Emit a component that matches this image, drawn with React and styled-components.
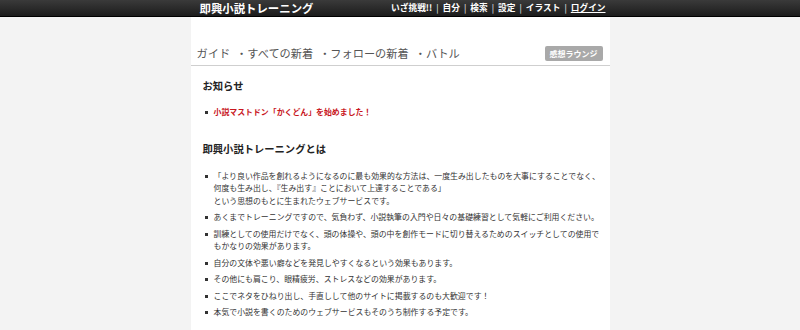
import styled, { createGlobalStyle } from "styled-components"

const GlobalStyle = createGlobalStyle`
  body {
    margin: 0;
    background: #f3f3f3;
    font-family: "Noto Sans CJK JP", "Noto Sans", sans-serif;
  }
`

const navItems = ["いざ挑戦!!", "自分", "検索", "設定", "イラスト"]

const tabs = ["ガイド", "・すべての新着", "・フォローの新着", "・バトル"]

const about = [
  ["「より良い作品を創れるようになるのに最も効果的な方法は、一度生み出したものを大事にすることでなく、", "何度も生み出し、『生み出す』ことにおいて上達することである」", "という思想のもとに生まれたウェブサービスです。"],
  ["あくまでトレーニングですので、気負わず、小説執筆の入門や日々の基礎練習として気軽にご利用ください。"],
  ["訓練としての使用だけでなく、頭の体操や、頭の中を創作モードに切り替えるためのスイッチとしての使用で", "もかなりの効果があります。"],
  ["自分の文体や悪い癖などを発見しやすくなるという効果もあります。"],
  ["その他にも肩こり、眼精疲労、ストレスなどの効果があります。"],
  ["ここでネタをひねり出し、手直しして他のサイトに掲載するのも大歓迎です！"],
  ["本気で小説を書くのためのウェブサービスもそのうち制作する予定です。"],
]

const App = () => {
  return (
    <>
      <GlobalStyle />
      <TopBar>
        <TopInner>
          <SiteTitle>即興小説トレーニング</SiteTitle>
          <Nav>
            {navItems.map((item) => (
              <span key={item}>
                <NavLink>{item}</NavLink>
                <Sep>|</Sep>
              </span>
            ))}
            <NavLink $underline>ログイン</NavLink>
          </Nav>
        </TopInner>
      </TopBar>

      <Main>
        <TabRow>
          <Tabs>
            {tabs.map((t) => (
              <Tab key={t}>{t}</Tab>
            ))}
          </Tabs>
          <LoungeBtn>感想ラウンジ</LoungeBtn>
        </TabRow>

        <Section>
          <Heading>お知らせ</Heading>
          <List $first>
            <Item $red>小説マストドン「かくどん」を始めました！</Item>
          </List>
        </Section>

        <Section $about>
          <Heading>即興小説トレーニングとは</Heading>
          <List>
            {about.map((lines, i) => (
              <Item key={i}>
                {lines.map((l, j) => (
                  <div key={j}>{l}</div>
                ))}
              </Item>
            ))}
          </List>
        </Section>
      </Main>
    </>
  )
}

export default App

const TopBar = styled.div`
  height: 16px;
  background: linear-gradient(#3a3a3a, #1c1c1c);
  border-bottom: 1px solid #000;
`

const TopInner = styled.div`
  width: 419px;
  margin: 0 auto;
  height: 16px;
  display: flex;
  align-items: center;
  justify-content: space-between;
  padding: 0 4px 0 9px;
  box-sizing: border-box;
`

const SiteTitle = styled.div`
  color: #fff;
  font-size: 11.4px;
  font-weight: 700;
  line-height: 16px;
`

const Nav = styled.div`
  display: flex;
  align-items: center;
  color: #fff;
  font-size: 8.7px;
  font-weight: 700;
  line-height: 16px;
`

const NavLink = styled.span`
  color: #fff;
  text-decoration: ${(p) => (p.$underline ? "underline" : "none")};
`

const Sep = styled.span`
  margin: 0 4px;
  font-weight: 400;
`

const Main = styled.div`
  width: 419px;
  margin: 0 auto;
  background: #fff;
  min-height: 313px;
`

const TabRow = styled.div`
  display: flex;
  align-items: center;
  justify-content: space-between;
  padding: 29px 7px 4px 6px;
  border-bottom: 1px solid #cfcfcf;
`

const Tabs = styled.div`
  display: flex;
  gap: 6px;
`

const Tab = styled.span`
  font-size: 11.2px;
  line-height: 15px;
  color: #555;
`

const LoungeBtn = styled.span`
  background: #a9a9a9;
  color: #fff;
  font-size: 8px;
  font-weight: 700;
  line-height: 15px;
  padding: 0 5px;
  border-radius: 2px;
`

const Section = styled.div`
  padding: ${(p) => (p.$about ? "19px" : "13px")} 10px 0 12px;
`

const Heading = styled.div`
  font-size: 10.3px;
  font-weight: 700;
  color: #222;
  line-height: 14px;
`

const List = styled.ul`
  list-style: none;
  margin: ${(p) => (p.$first ? "13px" : "14px")} 0 0;
  padding: 0;
`

const Item = styled.li`
  position: relative;
  padding-left: 11px;
  margin-bottom: 4px;
  font-size: 7.9px;
  line-height: 12.5px;
  color: ${(p) => (p.$red ? "#c8161d" : "#333")};
  font-weight: ${(p) => (p.$red ? 700 : 400)};
  white-space: nowrap;

  &::before {
    content: "";
    position: absolute;
    left: 2px;
    top: 5px;
    width: 3px;
    height: 3px;
    background: #333;
  }
`
